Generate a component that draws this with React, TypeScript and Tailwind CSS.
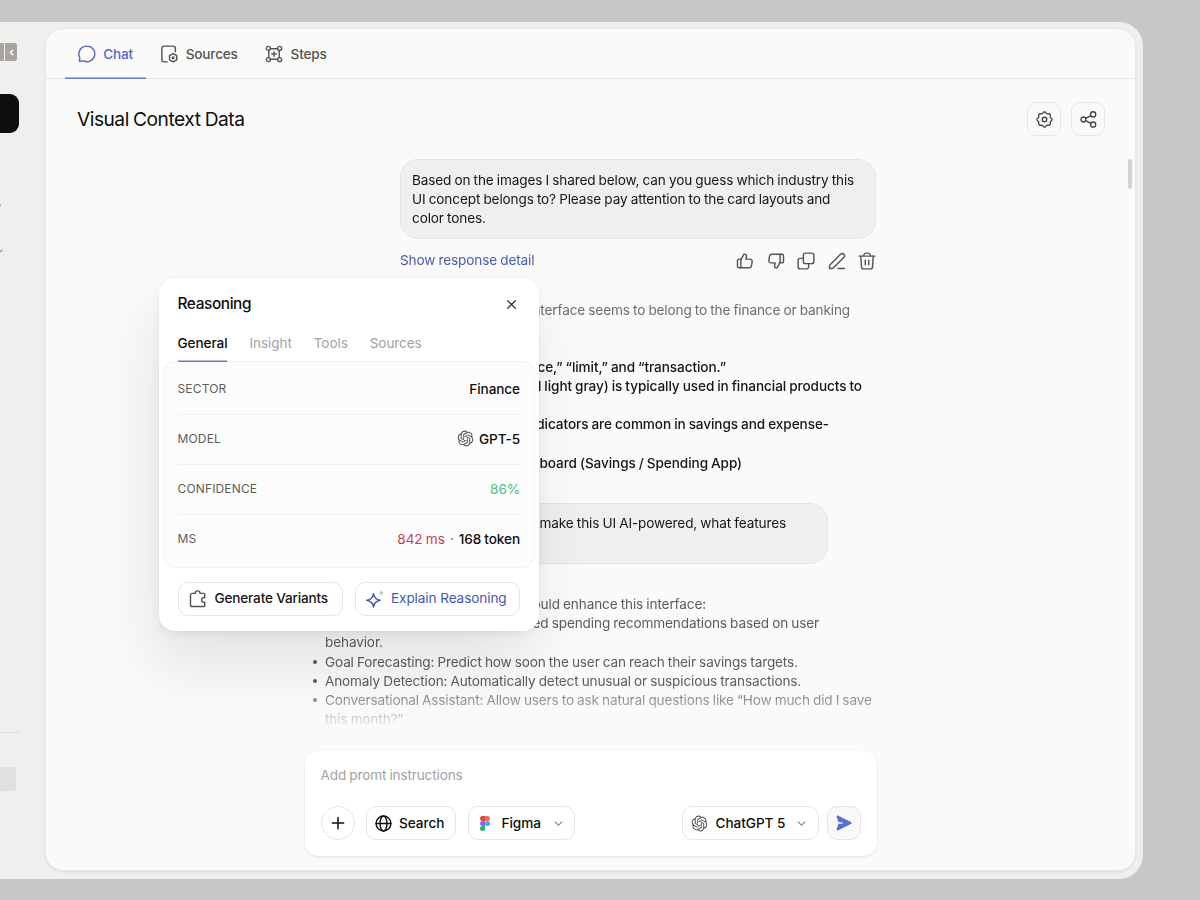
import type { ReactNode } from "react";
import { clsx } from "clsx";
import { RiOpenaiFill } from "react-icons/ri";

function Icon({
  children,
  className = "w-[18px] h-[18px]",
  strokeWidth = 1.9,
}: {
  children: ReactNode;
  className?: string;
  strokeWidth?: number;
}) {
  return (
    <svg
      viewBox="0 0 24 24"
      fill="none"
      stroke="currentColor"
      strokeWidth={strokeWidth}
      strokeLinecap="round"
      strokeLinejoin="round"
      className={clsx("shrink-0", className)}
    >
      {children}
    </svg>
  );
}

const ChatIcon = () => (
  <Icon>
    <path d="M12.2 1.5a10.4 10.4 0 1 1-4.6 19.8c-.6-.3-1-.2-1.6-.1l-3.2.5c-.7.1-1-.2-.9-.8l.5-3.100c.1-.6 0-1-.3-1.600A10.4 10.4 0 0 1 12.2 1.5Z" />
  </Icon>
);

const SourcesIcon = () => (
  <Icon>
    <path d="M9.5 22.5H5.5a3 3 0 0 1-3-3v-15a3 3 0 0 1 3-3h12a3 3 0 0 1 3 3V9" />
    <path d="m17.5 11.5 4.8 2.8v5.400l-4.800 2.800-4.800-2.800v-5.400z" />
    <circle cx="17.5" cy="17" r="1.2" />
  </Icon>
);

const StepsIcon = () => (
  <Icon>
    <circle cx="4.500" cy="4.500" r="2.700" />
    <circle cx="19.500" cy="4.500" r="2.700" />
    <circle cx="4.500" cy="19.500" r="2.700" />
    <circle cx="19.500" cy="19.500" r="2.700" />
    <path d="M7.200 5h9.600M7.200 19h9.600M5 7.200v9.600M19 7.200v9.600M12 9v6M9 12h6" />
  </Icon>
);

// eight rounded teeth
const gearPoints = Array.from({ length: 96 }, (_, i) => {
  const angle = (i / 96) * Math.PI * 2;
  const radius = 9.8 + 0.95 * Math.cos(angle * 8);
  return `${(12 + radius * Math.cos(angle)).toFixed(2)},${(12 + radius * Math.sin(angle)).toFixed(2)}`;
}).join(" ");

const tabs = [
  { name: "Chat", icon: <ChatIcon />, active: true },
  { name: "Sources", icon: <SourcesIcon />, active: false },
  { name: "Steps", icon: <StepsIcon />, active: false },
];

const messageActions = [
  {
    id: "like",
    icon: (
      <>
        <path d="M2 11.5a2 2 0 0 1 2-2h2.5V21H4a2 2 0 0 1-2-2z" />
        <path d="M6.5 10.5 10.5 3c2-.6 3.8.8 3.4 3l-.7 3.5h5.3a3 3 0 0 1 3 3.5l-.9 5.5a3 3 0 0 1-3 2.5H6.5" />
      </>
    ),
  },
  {
    id: "dislike",
    icon: (
      <>
        <path d="M22 12.5a2 2 0 0 1-2 2h-2.5V3H20a2 2 0 0 1 2 2z" />
        <path d="m17.5 13.5-4 7.5c-2 .6-3.8-.8-3.4-3l.7-3.5H5.5a3 3 0 0 1-3-3.5l.9-5.5a3 3 0 0 1 3-2.5h11.1" />
      </>
    ),
  },
  {
    id: "copy",
    icon: (
      <>
        <rect x="8.5" y="1.5" width="14" height="14" rx="2.5" />
        <path d="M8.5 8.5H4A2.5 2.5 0 0 0 1.5 11v9A2.5 2.5 0 0 0 4 22.5h9a2.5 2.5 0 0 0 2.5-2.5v-4.5" />
      </>
    ),
  },
  {
    id: "edit",
    icon: (
      <>
        <path d="M17 2.700 2.800 17c-.5.500-.8 1.200-.8 1.900V22h3.100c.7 0 1.400-.3 1.900-.8L21.300 7a2.800 2.800 0 0 0 0-4 3 3 0 0 0-4.300-.3Z" />
        <path d="M13.500 22H22" />
      </>
    ),
  },
  {
    id: "delete",
    icon: (
      <>
        <path d="M1.500 5.500h21M7 5.500 8.200 3a2.500 2.500 0 0 1 2.200-1.500h3.200A2.500 2.500 0 0 1 15.800 3L17 5.500" />
        <path d="m3.700 5.500.9 14a3 3 0 0 0 3 3h8.800a3 3 0 0 0 3-3l.9-14M9.700 11v6M14.300 11v6" />
      </>
    ),
  },
];

function Sidebar() {
  return (
    <aside className="w-[45px] shrink-0 flex flex-col items-start pt-[21px]">
      <div className="flex gap-px h-[18px]">
        <div className="w-[4px] bg-[#a8a4a0]" />
        <div className="w-[12px] rounded-r-[2px] bg-[#a8a4a0] text-white flex items-center justify-center">
          <Icon className="w-[11px] h-[11px]" strokeWidth={3.5}>
            <path d="m14.5 7-5 5 5 5" />
          </Icon>
        </div>
      </div>
      <div className="mt-[33px] w-[19px] h-[39px] rounded-r-[9px] bg-[#0f0e0c]" />
      <div className="mt-[71px] w-[1px] h-[3px] rounded-r bg-[#b5b5b4]" />
      <svg viewBox="0 0 4 4" className="mt-[42px] w-[4px] h-[4px]">
        <path d="M0 3 2.500 .8" stroke="#9a9a99" strokeWidth="1.500" />
      </svg>
      <div className="mt-[479px] w-[20px] h-px bg-[#e0e0df]" />
      <div className="mt-[34px] w-[16px] h-[24px] rounded-r-[3px] bg-[#e0e0df]" />
    </aside>
  );
}

function TabBar() {
  return (
    <div className="h-[50px] shrink-0 flex gap-[2px] border-b border-[#e6e6e5] pl-[19px] text-[13.6px] tracking-[-0.2px] font-medium">
      {tabs.map((tab) => (
        <button
          key={tab.name}
          className={clsx(
            "h-[50px] flex items-center gap-[7.5px] px-[12.7px]",
            tab.active
              ? "text-[#5268c4] shadow-[inset_0_-1.5px_0_#6478d2]"
              : "text-[#545453]"
          )}
        >
          {tab.icon}
          {tab.name}
        </button>
      ))}
    </div>
  );
}

function TitleRow() {
  return (
    <div className="mt-[23px] pl-[31px] pr-[30px] flex items-center justify-between">
      <h1 className="text-[19.2px] tracking-[-0.5px] [word-spacing:-0.6px] text-[#0f0f0e]">
        Visual Context Data
      </h1>
      <div className="flex gap-[10px] text-[#444443]">
        <button className="w-[34px] h-[34px] rounded-[9px] border border-[#e6e6e4] flex items-center justify-center">
          <Icon className="w-[17px] h-[17px]">
            <polygon points={gearPoints} />
            <circle cx="12" cy="12" r="3.2" />
          </Icon>
        </button>
        <button className="w-[34px] h-[34px] rounded-[9px] border border-[#e6e6e4] flex items-center justify-center">
          <Icon className="w-[17px] h-[17px]">
            <circle cx="4.8" cy="12" r="3.5" />
            <circle cx="18.500" cy="4.800" r="3.700" />
            <circle cx="18.500" cy="19.200" r="3.700" />
            <path d="m8 10.300 7.200-3.800M8 13.700l7.200 3.800" />
          </Icon>
        </button>
      </div>
    </div>
  );
}

// the left part of the reply sits under the popover
const replyLines = [
  { text: "Based on your visuals, this interface seems to belong to the finance or banking", width: "w-[546px]", intro: true },
  { text: "", width: "w-[546px]", intro: true },
  { text: "", width: "w-[546px]", intro: true },
  { text: "Labels such as “balance,” “limit,” and “transaction.”", width: "w-[422px]", intro: false },
  { text: "The palette (blue and light gray) is typically used in financial products to", width: "w-[558px]", intro: false },
  { text: "", width: "w-[558px]", intro: false },
  { text: "Charts and indicators are common in savings and expense-", width: "w-[525px]", intro: false },
  { text: "", width: "w-[525px]", intro: false },
  { text: "Finance Dashboard (Savings / Spending App)", width: "w-[438px]", intro: false },
];

function Conversation() {
  return (
    <div className="mt-[23px] ml-[258px] w-[572px] h-[574px] shrink-0 overflow-hidden text-[13.6px] leading-[19.07px] tracking-[-0.13px] [word-spacing:-0.5px] text-[#161615] flex flex-col [mask-image:linear-gradient(to_bottom,black_525px,transparent_572px)]">
      <div className="self-end w-[476px] shrink-0 h-[80px] rounded-[18px] border border-[#e4e4e3] bg-[#efefee] pt-[11px] pl-[11px]">
        <p>
          Based on the images I shared below, can you guess which industry this
          <br />
          UI concept belongs to? Please pay attention to the card layouts and
          <br />
          color tones.
        </p>
      </div>
      <div className="self-end w-[476px] mt-[12px] h-[19px] shrink-0 flex items-center justify-between">
        <a className="text-[#4c5cae]">Show response detail</a>
        <div className="flex gap-[12.5px] text-[#545453]">
          {messageActions.map((action) => (
            <button key={action.id}>
              <Icon>{action.icon}</Icon>
            </button>
          ))}
        </div>
      </div>

      <div className="mt-[31px] shrink-0">
        {replyLines.map((line, i) => (
          <p
            key={i}
            className={clsx(
              "h-[19.07px] text-right whitespace-nowrap",
              line.width,
              line.intro ? "text-[#6d6d6b]" : "font-[480] tracking-[-0.08px]"
            )}
          >
            {line.text}
          </p>
        ))}
      </div>

      <div className="mt-[30px] mr-[48px] self-end w-[476px] h-[61px] shrink-0 rounded-[18px] border border-[#e4e4e3] bg-[#efefee] pt-[10.5px] pr-[41px] text-right">
        <p className="whitespace-nowrap">
          If we wanted to make this UI AI-powered, what features
        </p>
      </div>

      <div className="mt-[31.8px] shrink-0 text-[#5c5c5a]">
        <p className="w-[402px] text-right whitespace-nowrap">
          Here are a few AI features that could enhance this interface:
        </p>
        <ul className="list-none pl-[21px]">
          <li className="w-[494px] text-right whitespace-nowrap">
            Smart Insights: Personalized spending recommendations based on user
          </li>
          <li>behavior.</li>
          {[
            "Goal Forecasting: Predict how soon the user can reach their savings targets.",
            "Anomaly Detection: Automatically detect unusual or suspicious transactions.",
            "Conversational Assistant: Allow users to ask natural questions like “How much did I save",
          ].map((item) => (
            <li key={item} className="flex items-center -ml-[12px] tracking-[-0.15px] whitespace-nowrap">
              <span className="w-[4px] h-[4px] shrink-0 rounded-full bg-[#5c5c5a] mr-[8px]" />
              {item}
            </li>
          ))}
          <li>this month?”</li>
        </ul>
      </div>
    </div>
  );
}

function Chevron() {
  return (
    <Icon className="w-[9px] h-[9px] text-[#8b8b89]" strokeWidth={3}>
      <path d="m3 8 9 8.5L21 8" />
    </Icon>
  );
}

function FigmaLogo() {
  return (
    <svg viewBox="0 0 20 30" className="w-[10px] h-[15px] shrink-0">
      <path d="M5 20h5v5a5 5 0 1 1-5-5z" fill="#24b57c" />
      <path d="M0 15a5 5 0 0 1 5-5h5v10H5a5 5 0 0 1-5-5z" fill="#9a5cf0" />
      <path d="M0 5a5 5 0 0 1 5-5h5v10H5a5 5 0 0 1-5-5z" fill="#dd4b3c" />
      <path d="M10 0h5a5 5 0 0 1 0 10h-5z" fill="#ef7059" />
      <circle cx="15" cy="15" r="5" fill="#35aee8" />
    </svg>
  );
}

function Composer() {
  const button =
    "h-[34px] border border-[#e6e6e5] rounded-[10px] flex items-center";
  return (
    <div className="mt-[18px] w-[572px] h-[105px] mx-auto shrink-0 rounded-[14px] bg-white shadow-[0_1px_3px_rgba(0,0,0,0.1)] px-[16px] pt-[14px] text-[13.6px] tracking-[-0.05px]">
      <p className="h-[20px] leading-[20px] tracking-[-0.15px] [word-spacing:-0.5px] text-[#a3a3a1]">
        Add promt instructions
      </p>
      <div className="mt-[21px] flex items-center font-medium text-[#0f0f0e]">
        <button className="w-[34px] h-[34px] rounded-full border border-[#e6e6e5] flex items-center justify-center">
          <Icon strokeWidth={2}>
            <path d="M12 4.5v15M4.5 12h15" />
          </Icon>
        </button>
        <button className={clsx(button, "ml-[11px] w-[90px] pl-[8px] gap-[7.5px]")}>
          <Icon className="w-[17px] h-[17px]" strokeWidth={2}>
            <circle cx="12" cy="12" r="10.5" />
            <ellipse cx="12" cy="12" rx="4.8" ry="10.5" />
            <path d="M1.5 12h21" />
          </Icon>
          Search
        </button>
        <button className={clsx(button, "ml-[12px] w-[107px] pl-[11px]")}>
          <FigmaLogo />
          <span className="ml-[12px] mr-[13px]">Figma</span>
          <Chevron />
        </button>
        <button className={clsx(button, "ml-auto w-[137px] pl-[7px]")}>
          <RiOpenaiFill className="w-[19px] h-[19px] text-[#545453]" />
          <span className="ml-[7px] mr-[12px] whitespace-nowrap">ChatGPT 5</span>
          <Chevron />
        </button>
        <button className={clsx(button, "ml-[8px] w-[34px] justify-center bg-[#f8f8f7]")}>
          <svg viewBox="0 0 16 16" className="w-[16px] h-[16px]">
            <path
              d="M.7 2.1C.3.9 1.2.2 2.3.7l12.6 6.2c1 .5 1 1.7 0 2.2L2.3 15.3c-1.1.5-2-.2-1.6-1.4L2.5 8.8H6a.8.8 0 0 0 0-1.6H2.5z"
              fill="#5570d0"
            />
          </svg>
        </button>
      </div>
    </div>
  );
}

function ReasoningRow({ label, children }: { label: string; children: ReactNode }) {
  return (
    <div className="h-[50px] flex items-center justify-between border-b border-[#f0f0ef] last:border-transparent">
      <span className="text-[12px] tracking-[0.15px] text-[#5c5c5a]">{label}</span>
      <span className="flex items-center font-medium text-[#0f0f0e]">
        {children}
      </span>
    </div>
  );
}

function ReasoningPopover() {
  return (
    <div className="absolute left-[158.5px] top-[277.5px] w-[380.5px] h-[353.5px] rounded-[16px] bg-white px-[4px] text-[13.6px] tracking-[-0.1px] [word-spacing:-0.4px] shadow-[0_0_2px_rgba(0,0,0,0.05),0_4px_10px_rgba(0,0,0,0.05),-6px_34px_60px_rgba(0,0,0,0.09)]">
      <div className="h-[53px] px-[15px] flex items-center justify-between">
        <h2 className="text-[15.4px] font-medium tracking-[-0.4px] text-[#0f0f0e]">
          Reasoning
        </h2>
        <button className="w-[18px] h-[18px] flex items-center justify-center text-[#333332]">
          <Icon className="w-[13px] h-[13px]" strokeWidth={2.3}>
            <path d="m5 5 14 14M19 5 5 19" />
          </Icon>
        </button>
      </div>

      <div className="relative z-10 h-[30px] px-[15px] flex gap-[22px] text-[#a3a3a1]">
        <button className="h-[31px] pb-[5px] shadow-[inset_0_-1.5px_0_#6478d2] font-medium text-[#0f0f0e]">
          General
        </button>
        <button className="h-[31px] pb-[5px]">Insight</button>
        <button className="h-[31px] pb-[5px]">Tools</button>
        <button className="h-[31px] pb-[5px]">Sources</button>
      </div>

      <div className="h-[207px] rounded-[12px] border border-[#f2f2f1] bg-[#fcfcfc] px-[14px] pt-[3px]">
        <ReasoningRow label="SECTOR">Finance</ReasoningRow>
        <ReasoningRow label="MODEL">
          <RiOpenaiFill className="w-[19px] h-[19px] mr-[4px] text-[#545453]" />
          GPT-5
        </ReasoningRow>
        <ReasoningRow label="CONFIDENCE">
          <span className="font-normal text-[#4cc283]">86%</span>
        </ReasoningRow>
        <ReasoningRow label="MS">
          <span className="font-normal text-[#c43d59]">842 ms</span>
          <span className="mx-[5px] text-[#8b8b89]">·</span>
          168 token
        </ReasoningRow>
      </div>

      <div className="mt-[14px] px-[15px] flex gap-[12px]">
        <button className="h-[34px] w-[165px] shrink-0 rounded-[10px] border border-[#e6e6e5] flex items-center pl-[10px] gap-[8px] font-medium tracking-[-0.18px] text-[#161615] whitespace-nowrap">
          <Icon className="w-[18px] h-[18px] text-[#545453]">
            <path d="M4.500 4.500H8.200a3.300 3.300 0 0 1 6.600 0h4.700a1.500 1.500 0 0 1 1.500 1.500v4.200c-2-.8-4.300.5-4.300 3s2.300 3.800 4.300 3V20.500a1.500 1.500 0 0 1-1.500 1.500H4.500A2.500 2.500 0 0 1 2 19.500V7a2.500 2.500 0 0 1 2.500-2.500z" />
          </Icon>
          Generate Variants
        </button>
        <button className="h-[34px] w-[165px] shrink-0 rounded-[10px] border border-[#e6e6e5] flex items-center pl-[10px] gap-[7.5px] text-[#4558b8] whitespace-nowrap">
          <Icon className="w-[18px] h-[18px]" strokeWidth={2.1}>
            <path d="M10 5c.8 5 3.300 7.700 8.800 8.800-5.500 1.100-8 3.700-8.800 8.700-.8-5-3.300-7.600-8.800-8.700C6.700 12.700 9.200 10 10 5Z" />
            <path d="M20.500 1.500v5M18 4h5" stroke="#9fb9dc" strokeWidth="1.600" />
          </Icon>
          Explain Reasoning
        </button>
      </div>
    </div>
  );
}

export default function App() {
  return (
    <div className="w-[1200px] h-[900px] overflow-hidden bg-[#c7c7c7] pt-[22px] font-['Inter',sans-serif]">
      <div className="w-[1143px] h-[857px] rounded-r-[24px] bg-[#efefee] flex">
        <Sidebar />
        <main className="w-[1091px] h-[843px] mt-[6px] shrink-0 flex flex-col rounded-[18px] border border-[#e8e8e7] bg-[#fafaf8] shadow-[0_1px_2px_rgba(0,0,0,0.08)]">
          <TabBar />
          <TitleRow />
          <Conversation />
          <Composer />
        </main>
      </div>
      {/* Scrollbar thumb */}
      <div className="absolute left-[1128px] top-[159px] w-[4px] h-[30px] rounded-full bg-[#d3d3d2]" />
      <ReasoningPopover />
    </div>
  );
}
